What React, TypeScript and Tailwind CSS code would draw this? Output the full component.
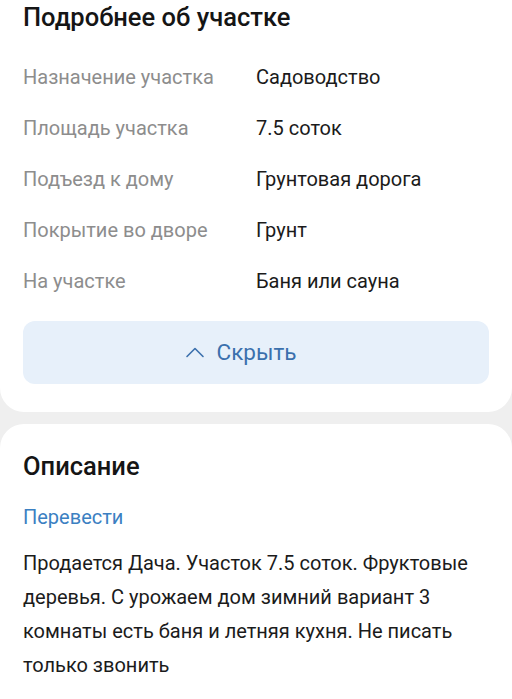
const rows: [string, string][] = [
  ["Назначение участка", "Садоводство"],
  ["Площадь участка", "7.5 соток"],
  ["Подъезд к дому", "Грунтовая дорога"],
  ["Покрытие во дворе", "Грунт"],
  ["На участке", "Баня или сауна"],
];

export default function App() {
  return (
    <div
      className="flex min-h-[699px] flex-col bg-[#efefef] text-[#1b1b1b]"
      style={{ fontFamily: "Roboto, 'Noto Sans', sans-serif" }}
    >
      <section className="rounded-b-[24px] bg-white px-[23px] pt-[2px] pb-[28px]">
        <h2 className="text-[25.5px] leading-[30px] font-medium text-[#151515]">
          Подробнее об участке
        </h2>
        <dl className="mt-[19px] grid grid-cols-[233px_1fr]">
          {rows.map(([label, value]) => (
            <div className="contents" key={label}>
              <dt className="flex h-[51px] items-center text-[20px] text-[#8d8d8d]">{label}</dt>
              <dd className="flex h-[51px] items-center text-[20px] text-[#1b1b1b]">{value}</dd>
            </div>
          ))}
        </dl>
        <button
          className="mt-[15px] flex h-[63px] w-full items-center justify-center gap-[12px] rounded-[12px] bg-[#e7f0fa] pr-[31px] text-[22.5px] text-[#3b70ad]"
          type="button"
        >
          <svg width="20" height="12" viewBox="0 0 20 12" fill="none" className="mt-[-2px]">
            <path d="M2 10.5 L10 2.5 L18 10.5" stroke="#3b70ad" strokeWidth="1.6" strokeLinecap="round" strokeLinejoin="round" />
          </svg>
          Скрыть
        </button>
      </section>

      <section className="mt-[12px] flex-1 rounded-t-[24px] bg-white px-[23px] pt-[27px] pb-[24px]">
        <h2 className="text-[25.5px] leading-[30px] font-medium text-[#151515]">Описание</h2>
        <p className="mt-[23px] text-[20px] leading-[26px] text-[#3b80c2]">Перевести</p>
        <p className="mt-[16px] text-[20px] leading-[34px] text-[#1b1b1b]">
          Продается Дача. Участок 7.5 соток. Фруктовые деревья. С урожаем дом зимний вариант 3
          комнаты есть баня и летняя кухня. Не писать только звонить
        </p>
      </section>
    </div>
  );
}
